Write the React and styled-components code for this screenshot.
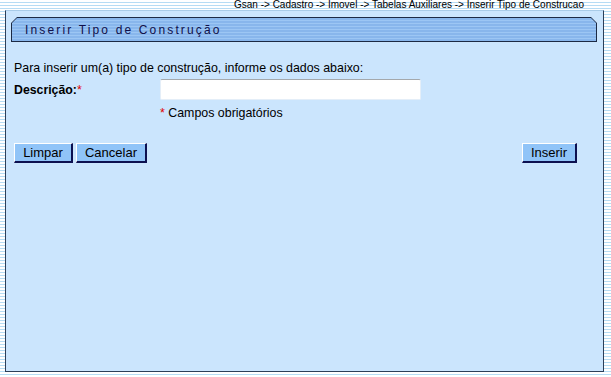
import React, { useState } from 'react'
import styled, { createGlobalStyle } from 'styled-components'

const GlobalStyle = createGlobalStyle`
  html, body {
    margin: 0;
    padding: 0;
  }
  body {
    font-family: "Liberation Sans", Arial, sans-serif;
    background: repeating-linear-gradient(
      to bottom,
      #ffffff 0px,
      #ffffff 2px,
      #b6dcf4 2px,
      #b6dcf4 3px
    );
    min-height: 377px;
  }
`

const Page = styled.div`
  width: 611px;
  height: 377px;
  overflow: hidden;
`
const Breadcrumb = styled.div`
  height: 10px;
  padding-right: 27px;
  text-align: right;
  font-size: 10px;
  line-height: 10px;
  color: #000;
  white-space: nowrap;
`
const Panel = styled.div`
  margin-left: 5px;
  width: 597px;
  height: 360px;
  background: #cbe5fd;
  border-top: 1px solid #a8cbe8;
  border-left: 1px solid #2c3e58;
  border-right: 1px solid #2c3e58;
  border-bottom: 1px solid #2c3e58;
`
const Inner = styled.div`
  padding: 6px 0 0 5px;
`
const TitleFrame = styled.div`
  width: 586px;
  height: 25px;
  padding: 1px;
  box-sizing: border-box;
  background: #1c2a44;
  clip-path: polygon(6px 0, calc(100% - 6px) 0, 100% 6px, 100% 100%, 0 100%, 0 6px);
`
const TitleBar = styled.div`
  height: 100%;
  display: flex;
  align-items: center;
  padding-left: 13px;
  background: repeating-linear-gradient(
    to bottom,
    #88b6ec 0px,
    #88b6ec 2px,
    #9cc6f4 2px,
    #9cc6f4 3px
  );
  clip-path: polygon(5px 0, calc(100% - 5px) 0, 100% 5px, 100% 100%, 0 100%, 0 5px);
  font-size: 12px;
  letter-spacing: 2.15px;
  color: #10104a;
`
const Content = styled.div`
  padding-left: 3px;
`
const Intro = styled.div`
  margin-top: 19px;
  font-size: 12.4px;
  line-height: 14px;
`
const FieldRow = styled.div`
  display: grid;
  grid-template-columns: 146px 261px;
  align-items: center;
  margin-top: 4px;
`
const Label = styled.label`
  font-size: 12.3px;
  font-weight: bold;
`
const Req = styled.span`
  color: #e00000;
  font-weight: normal;
`
const TextInput = styled.input`
  width: 261px;
  height: 21px;
  box-sizing: border-box;
  border: 1px solid #e4eef8;
  border-top-color: #a4a8ac;
  border-radius: 2px;
  background: #fff;
  outline: none;
  font-family: inherit;
  font-size: 12px;
`
const Note = styled.div`
  margin-top: 6px;
  margin-left: 146px;
  font-size: 12.4px;
  line-height: 14px;
`
const Actions = styled.div`
  display: flex;
  align-items: center;
  margin-top: 23px;
  width: 563px;
`
const Group = styled.div`
  display: flex;
  gap: 3px;
`
const Spacer = styled.div`
  flex: 1;
`
const Button = styled.button`
  height: 20px;
  width: ${(p) => p.$w}px;
  box-sizing: border-box;
  padding: 0;
  background: #90c4f8;
  border-top: 1px solid #ffffff;
  border-left: 1px solid #ffffff;
  border-right: 2px solid #0c1050;
  border-bottom: 2px solid #0c1050;
  font-family: "Liberation Sans", Arial, sans-serif;
  font-size: 13px;
  color: #000;
  cursor: pointer;
`

export default function App() {
  const [descricao, setDescricao] = useState('')
  return (
    <Page>
      <GlobalStyle />
      <Breadcrumb>
        Gsan -&gt; Cadastro -&gt; Imovel -&gt; Tabelas Auxiliares -&gt; Inserir Tipo de Construcao
      </Breadcrumb>
      <Panel>
        <Inner>
          <TitleFrame>
            <TitleBar>Inserir Tipo de Construção</TitleBar>
          </TitleFrame>
          <Content>
            <Intro>Para inserir um(a) tipo de construção, informe os dados abaixo:</Intro>
            <FieldRow>
              <Label>
                Descrição:<Req>*</Req>
              </Label>
              <TextInput
                value={descricao}
                onChange={(e) => setDescricao(e.target.value)}
              />
            </FieldRow>
            <Note>
              <Req>*</Req> Campos obrigatórios
            </Note>
            <Actions>
              <Group>
                <Button $w={59} onClick={() => setDescricao('')}>Limpar</Button>
                <Button $w={71}>Cancelar</Button>
              </Group>
              <Spacer />
              <Button $w={55}>Inserir</Button>
            </Actions>
          </Content>
        </Inner>
      </Panel>
    </Page>
  )
}
